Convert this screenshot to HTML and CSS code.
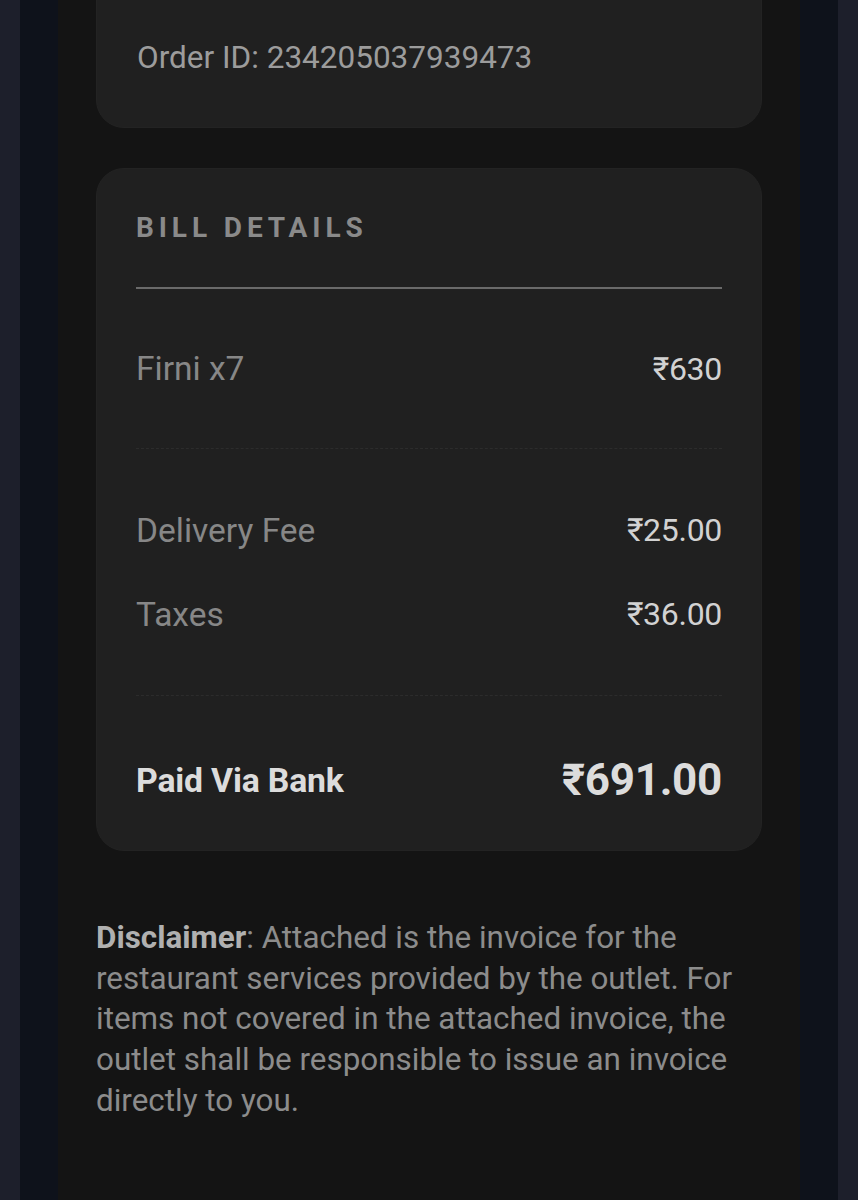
FILE: index.html
```html
<!DOCTYPE html>
<html lang="en">
<head>
<meta charset="utf-8">
<title>Order bill</title>
<link rel="stylesheet" href="styles.css">
</head>
<body>
<div class="frame">
  <main class="panel">
    <section class="card card-order">
      <p class="order-id">Order ID: 234205037939473</p>
    </section>

    <section class="card card-bill">
      <h2 class="bill-title">BILL DETAILS</h2>
      <div class="rule"></div>

      <div class="items">
        <div class="row">
          <span class="label">Firni x7</span>
          <span class="amount">₹630</span>
        </div>
      </div>

      <div class="charges">
        <div class="row charge">
          <span class="label">Delivery Fee</span>
          <span class="amount">₹25.00</span>
        </div>
        <div class="row charge">
          <span class="label">Taxes</span>
          <span class="amount">₹36.00</span>
        </div>
      </div>

      <div class="row total">
        <span class="total-label">Paid Via Bank</span>
        <span class="total-amount">₹691.00</span>
      </div>
    </section>

    <p class="disclaimer"><strong>Disclaimer</strong>: Attached is the invoice for the restaurant services provided by the outlet. For items not covered in the attached invoice, the outlet shall be responsible to issue an invoice directly to you.</p>
  </main>
</div>
</body>
</html>
```

FILE: styles.css
```css
* { box-sizing: border-box; }

html, body {
  margin: 0;
  padding: 0;
  height: 100%;
}

body {
  background: #1d1f2b;
  font-family: Roboto, "Noto Sans", "Liberation Sans", sans-serif;
  overflow: hidden;
}

.frame {
  margin: 0 20px;
  padding: 0 38px;
  background: #0e121b;
  min-height: 100vh;
}

.panel {
  background: #141414;
  min-height: 100vh;
  padding: 0 38px;
  display: flex;
  flex-direction: column;
}

.card {
  background: #202020;
  border: 1px solid #232323;
  border-radius: 28px;
}

.card-order {
  margin-top: -40px;
  padding: 77px 40px 49px;
}

.order-id {
  margin: 0;
  font-size: 31.5px;
  line-height: 40px;
  color: #9c9c9c;
}

.card-bill {
  margin-top: 40px;
  padding: 39px 39px 0;
}

.bill-title {
  margin: 0;
  font-size: 28px;
  line-height: 40px;
  font-weight: 700;
  letter-spacing: 4.9px;
  color: #8a8a8a;
}

.rule {
  margin-top: 39px;
  height: 2px;
  background: #6a6a6a;
}

.row {
  display: flex;
  justify-content: space-between;
  align-items: center;
}

.items {
  border-bottom: 1px dashed #2c2c2c;
}

.items .row {
  height: 159px;
}

.label {
  font-size: 33.5px;
  color: #878787;
}

.amount {
  font-size: 32px;
  color: #d2d2d2;
  letter-spacing: -0.3px;
}

.charges {
  padding: 39px 0;
  border-bottom: 1px dashed #2c2c2c;
}

.charge {
  height: 84px;
}

.total {
  height: 60px;
  margin: 54px 0 40px;
}

.total-label {
  font-size: 33.8px;
  font-weight: 700;
  color: #dcdcdc;
  letter-spacing: -0.2px;
}

.total-amount {
  font-size: 44px;
  font-weight: 700;
  color: #dcdcdc;
  letter-spacing: -0.3px;
}

.disclaimer {
  margin: 67px 0 0;
  font-size: 31.4px;
  line-height: 40.7px;
  color: #8c8c8c;
}

.disclaimer strong {
  font-weight: 700;
  color: #b0b0b0;
}
```
